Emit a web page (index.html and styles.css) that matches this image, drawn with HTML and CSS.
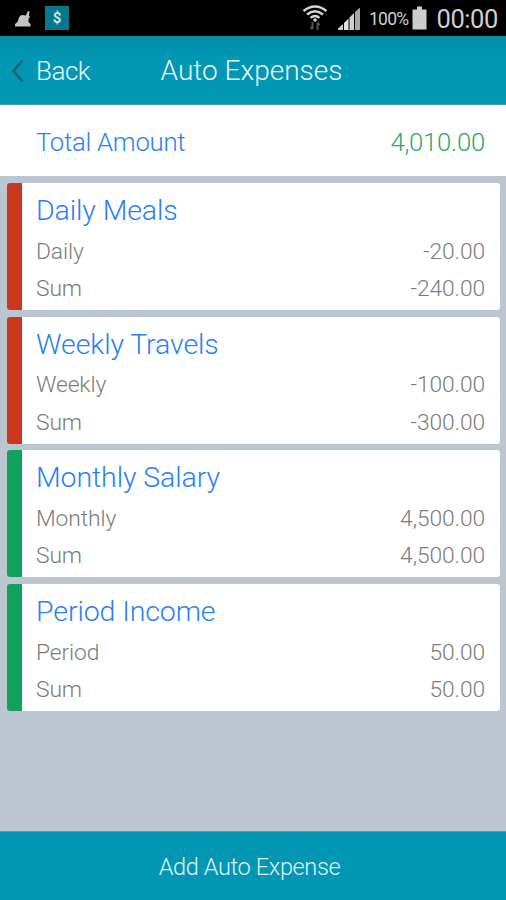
FILE: index.html
```html
<!DOCTYPE html>
<html lang="en">
<head>
    <meta charset="UTF-8">
    <meta name="viewport" content="width=device-width, initial-scale=1.0">
    <title>Auto Expenses</title>
    <link rel="stylesheet" href="styles.css">
</head>
<body>
    <div class="status-bar">
        <div class="status-left">
            <svg class="icon-clean" width="18" height="18" viewBox="0 0 18 18">
                <path d="M1 16.500 V14 L3.500 12 L5 7.500 Q6 5 8 5 L12 5.500 L13.500 1.500 L15.500 1 L15 5.500 L16 7 L14.500 8.500 V12 L16.500 14 V16.500 Z" fill="#c4c4c4"/>
            </svg>
            <span class="app-badge">$</span>
        </div>
        <div class="status-right">
            <svg class="icon-wifi" width="26" height="26" viewBox="0 0 26 26" fill="none" stroke="#d6d6d6">
                <path d="M1.500 6 Q13 -3 24.500 6" stroke-width="2.400"/>
                <path d="M5 9.500 Q13 3 21 9.500" stroke-width="2.400"/>
                <path d="M8.500 12.800 Q13 9 17.500 12.800" stroke-width="2.400"/>
                <circle cx="13" cy="15" r="1.800" fill="#d6d6d6" stroke="none"/>
                <path d="M10.500 17 V24 M8.500 22 L10.500 24.500 M15.500 25 V18 M17.500 20 L15.500 17.500" stroke="#555" stroke-width="2"/>
            </svg>
            <svg class="icon-signal" width="24" height="24" viewBox="0 0 24 24">
                <path d="M1 23 V21.500 L6 17 V23 Z" fill="#c8c8c8"/>
                <path d="M7 23 V16 L11.500 11.500 V23 Z" fill="#e2e2e2"/>
                <path d="M12.500 23 V10.500 L17 6 V23 Z" fill="#d0d0d0"/>
                <path d="M18 23 V5 L23 0.500 V23 Z" fill="#a8a8a8"/>
            </svg>
            <span class="battery-level">100%</span>
            <svg class="icon-battery" width="15" height="24" viewBox="0 0 15 24">
                <path d="M5 0.500 H10 V3.500 H14.500 V23.500 H0.500 V3.500 H5 Z" fill="#cdcdcd"/>
            </svg>
            <span class="clock">00:00</span>
        </div>
    </div>

    <div class="header">
        <div class="back">
            <svg class="icon-back" width="14" height="24" viewBox="0 0 14 24">
                <path d="M11.500 1.500 L2.500 12 L11.500 22.500" fill="none" stroke="#265f70" stroke-width="2.600"/>
            </svg>
            <span>Back</span>
        </div>
        <div class="title">Auto Expenses</div>
    </div>

    <div class="total">
        <span>Total Amount</span>
        <span class="total-value">4,010.00</span>
    </div>

    <div class="list">
        <div class="card expense">
            <div class="card-title">Daily Meals</div>
            <div class="row"><span>Daily</span><span>-20.00</span></div>
            <div class="row"><span>Sum</span><span>-240.00</span></div>
        </div>
        <div class="card expense">
            <div class="card-title">Weekly Travels</div>
            <div class="row"><span>Weekly</span><span>-100.00</span></div>
            <div class="row"><span>Sum</span><span>-300.00</span></div>
        </div>
        <div class="card income">
            <div class="card-title">Monthly Salary</div>
            <div class="row"><span>Monthly</span><span>4,500.00</span></div>
            <div class="row"><span>Sum</span><span>4,500.00</span></div>
        </div>
        <div class="card income">
            <div class="card-title">Period Income</div>
            <div class="row"><span>Period</span><span>50.00</span></div>
            <div class="row"><span>Sum</span><span>50.00</span></div>
        </div>
    </div>

    <div class="footer">Add Auto Expense</div>
</body>
</html>
```

FILE: styles.css
```css
* {
    box-sizing: border-box;
}
body {
    margin: 0;
    height: 900px;
    display: flex;
    flex-direction: column;
    background-color: #bcc6d0;
    font-family: Roboto, sans-serif;
    font-weight: 300;
    overflow: hidden;
}
svg {
    display: block;
    flex: none;
}
.status-bar {
    height: 36px;
    flex: none;
    display: flex;
    justify-content: space-between;
    background-color: #000;
    color: #cfcfcf;
}
.status-left {
    display: flex;
    align-items: center;
    padding-left: 14px;
}
.icon-clean {
    margin-top: 1px;
}
.app-badge {
    width: 24px;
    height: 24px;
    margin-left: 13px;
    background-color: #08798c;
    color: #d5e2e5;
    font-size: 15px;
    font-weight: 700;
    line-height: 25px;
    text-align: center;
}
.status-right {
    display: flex;
    align-items: flex-start;
    padding-right: 8px;
}
.icon-wifi {
    margin-top: 5px;
}
.icon-signal {
    margin: 7px 0 0 9px;
}
.battery-level {
    margin: 9px 0 0 8px;
    font-size: 17.5px;
    font-weight: 400;
    line-height: 21px;
    letter-spacing: -0.7px;
}
.icon-battery {
    margin: 6px 0 0 4px;
}
.clock {
    margin: 4px 0 0 9px;
    font-size: 25.5px;
    font-weight: 400;
    line-height: 30px;
    letter-spacing: -0.4px;
}
.header {
    height: 69px;
    flex: none;
    display: grid;
    grid-template-columns: 1fr auto 1fr;
    align-items: center;
    padding: 1px 3px 0 0;
    background: linear-gradient(#078ca8, #0096b4 30%);
    border-bottom: 1px solid #4a9db2;
    color: #e9f6fa;
}
.back {
    display: flex;
    align-items: center;
    gap: 11px;
    padding-left: 11px;
    font-size: 26px;
    letter-spacing: -0.5px;
}
.title {
    font-size: 28px;
}
.total {
    height: 71px;
    flex: none;
    display: flex;
    justify-content: space-between;
    align-items: center;
    padding: 2px 21px 0 36px;
    background-color: #fff;
    color: #2b80f5;
    font-size: 25.7px;
    letter-spacing: -0.25px;
}
.total-value {
    color: #2aa96a;
}
.list {
    flex: 1;
    display: flex;
    flex-direction: column;
    gap: 6.67px;
    padding: 7px 6px 0 7px;
}
.card {
    height: 127px;
    padding: 7px 15px 0 14px;
    border-left: 15px solid;
    border-radius: 3px;
    background-color: #fff;
}
.expense {
    border-left-color: #c9371d;
}
.income {
    border-left-color: #11a05e;
}
.card-title {
    height: 42.6px;
    color: #2b80f5;
    font-size: 28.5px;
    line-height: 41px;
    letter-spacing: -0.1px;
}
.row {
    display: flex;
    justify-content: space-between;
    color: #7c7c7c;
    font-size: 22.8px;
    line-height: 37.4px;
    letter-spacing: -0.1px;
}
.footer {
    height: 69px;
    flex: none;
    padding-right: 7px;
    background-color: #0096b4;
    border-top: 1px solid #4a9db2;
    color: #e0f2f6;
    font-size: 23.5px;
    line-height: 70px;
    letter-spacing: -0.35px;
    text-align: center;
}
```
